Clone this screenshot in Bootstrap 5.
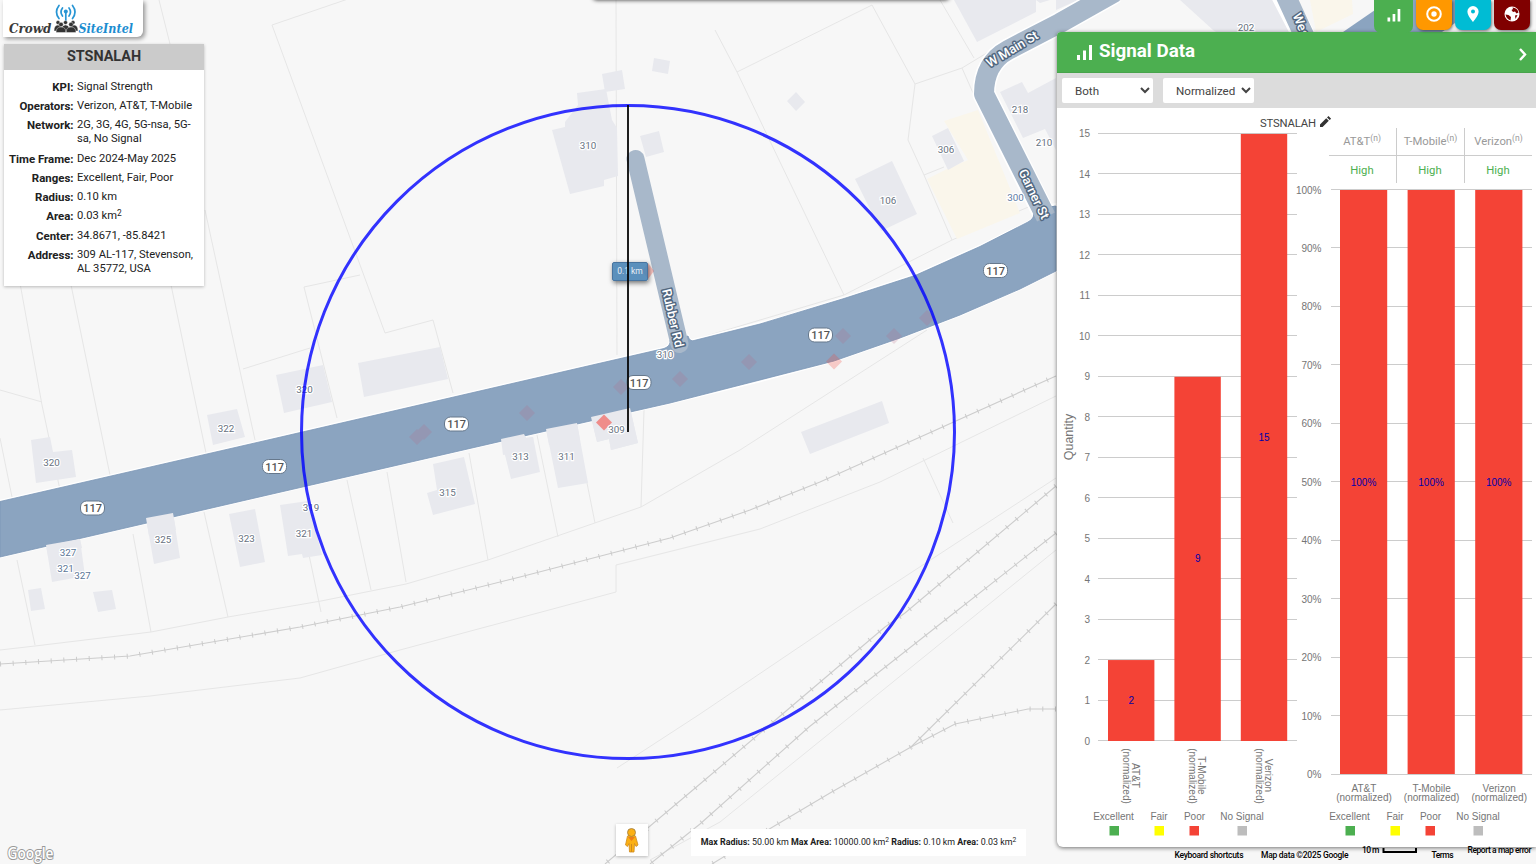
<!DOCTYPE html>
<html lang="en">
<head>
<meta charset="utf-8">
<meta name="viewport" content="width=device-width, initial-scale=1">
<title>Crowd SiteIntel</title>
<link href="https://cdn.jsdelivr.net/npm/bootstrap@5.3.0/dist/css/bootstrap.min.css" rel="stylesheet">
<style>
body{font-family:Roboto,sans-serif;width:1536px;height:864px;background:#f7f7f7;color:#212121}
.map-canvas{inset:0;width:1536px;height:864px}
.parcel{fill:none;stroke:#e6e6e6;stroke-width:1}
.bldg{fill:#e8e9ee}
.rail{fill:none;stroke:#cdcdcd;stroke-width:1.1}
.ties{fill:none;stroke:#cbcbcb;stroke-width:5;stroke-dasharray:1 11.7}
.street{fill:none;stroke:#a8b8ca;stroke-width:20;stroke-linejoin:round}
.edge{fill:none;stroke:#fff;stroke-width:23;stroke-linejoin:round}
.num{font:9.8px Roboto,sans-serif;fill:#667180;stroke:#fff;stroke-width:2.4px;paint-order:stroke;text-anchor:middle}
.stname{font:500 12.8px Roboto,sans-serif;fill:#fff;stroke:#51677f;stroke-width:3px;paint-order:stroke;stroke-linejoin:round;text-anchor:middle}
.shield rect{fill:#fff;stroke:#66788c;stroke-width:1}
.shield text{font:500 11px Roboto,sans-serif;fill:#555;text-anchor:middle}
.brand-box{left:3px;top:0;width:140px;height:37px;border-radius:0 0 6px 0;box-shadow:2px 2px 4px rgba(0,0,0,.4)}
.info-card{left:4px;top:44px;width:200px;height:242px;font-size:11.2px;line-height:14.4px;box-shadow:0 1px 3px rgba(0,0,0,.25)}
.info-title{height:25.5px;background:#cbcbcb;font-size:14.4px;line-height:26px;color:#333}
.info-row{margin-bottom:4.85px}
.info-key{width:69.5px;flex:none;font-size:11.45px}
.info-val{padding-left:3.5px;white-space:nowrap}
.info-row sup,.limits sup{font-size:75%;top:-.45em;line-height:0}
.dist{left:612px;top:262px;width:36px;height:19px;font-size:8.5px;background:rgba(70,130,180,.88);color:#e8eef5;border:1px solid #48749f;border-radius:2px;box-shadow:1px 2px 5px rgba(0,0,0,.55)}
.pegman{left:616px;top:824px;width:32px;height:32px;box-shadow:0 1px 3px rgba(0,0,0,.25)}
.limits{left:691px;top:829px;width:335px;height:27px;font-size:8.9px}
.top-shade{left:593px;top:-10px;width:356px;height:10px;border-radius:4px;box-shadow:0 0 4px rgba(0,0,0,.8)}
.tool-tabs{left:1374px;top:0;gap:3px}
.tool-tab{width:36px;height:30px;border-radius:0 0 7px 7px;box-shadow:1px 1px 3px rgba(0,0,0,.5)}
.tab-on{width:39px;height:33px;box-shadow:none}
.side-panel{left:1057px;top:32px;width:479px;height:815px;border-radius:4px 0 0 6px;box-shadow:0 1px 4px rgba(0,0,0,.55)}
.panel-head{height:41px;background:#4caf50;border-radius:4px 0 0 0;font-size:18.8px;font-weight:700;padding-left:20px;padding-right:8px;border-bottom:1px solid #48a44c}
.panel-tools{height:35px;background:#dcdcdc;padding:5px 0 5px 5px;gap:10px}
.pick{width:91px;height:25px;font-size:11.6px;border:0;border-radius:2px;color:#444;padding:0 0 0 9px}
.chart{font-family:"Liberation Sans",Arial,sans-serif;font-size:10px;fill:#757575}
.chart line{stroke:#ccc}
.credit{font-size:9px;color:#000;top:848px;left:1174px;white-space:nowrap}
</style>
</head>
<body class="position-relative overflow-hidden">
<svg class="map-canvas position-absolute" viewBox="0 0 1536 864">
<g class="parcel">
<path d="M159 0L170 44M205 210L255 440M272 25L385 333L433 320L453 393M272 25L348 -1M5 200L42 405L60 490M0 390L42 402M70 280L110 475M0 438L12 497M170 280L206 453M243 369L310 348M360 275L304 287L337 418M616 0L617 355"/>
<path d="M715 30L737 72L780 162L844 295M737 72L872 5L915 84L962 68L1000 45M915 84L908 140L924 175L952 240M924 175L944 167M940 0L974 58M962 68L985 120M693 340L844 295L952 240L1033 205"/>
<path d="M17 560L35 645M133 534L151 632M204 512L228 617M308 550L321 612M347 480L371 590M387 472L406 582M469 453L488 560M537 435L558 537M575 423L595 523M644 410L641 507"/>
<path d="M0 624"/>
<path d="M0 650L35 646L151 632L228 617L321 601L406 584L488 560L641 507L740 450L927 330M0 710L150 696L300 678L400 650L616 592V565L760 529L880 482L1056 396M617 768L700 714L860 606L1056 478M923 458L953 523M650 860L720 822L1056 550"/>
</g>
<g fill="#faf6eb"><path d="M944 121L978 110L1020 213L957 239L927 179L945 170L968 160Z"/><path d="M1310 0H1352L1353 14L1316 32Z"/></g>
<g class="bldg">
<path d="M577 93L606 89L612 120L617 128L618 176L604 180V186L570 194L552 130L565 127L565 122L578 105Z"/>
<path d="M602 74L622 70L625 89L605 92ZM654 58L670 61L668 74L652 71ZM640 136L659 131L664 152L646 157ZM787 101L796 92L805 102L796 111Z"/>
<path d="M855 179L892 161L917 214L881 231ZM932 136L948 128L964 161L948 170ZM954 0H1036V12L977 42ZM1036 0H1050L1040 3Z"/>
<path d="M1000 92L1022 82L1028 93L1056 78V150L1045 129L1023 138ZM1180 0L1213 30L1216 32H1290L1275 0ZM1056 0V10L1078 0Z"/>
<path d="M358 363L440 347L448 379L364 397ZM276 375L323 365L332 402L284 413ZM207 415L237 409L245 437L213 445ZM31 440L50 437L53 452L72 450L76 477L36 483Z"/>
<path d="M46 545L80 539L85 576L52 582ZM28 590L41 588L45 609L31 611ZM93 592L112 590L116 609L98 612ZM146 518L173 513L180 558L154 564ZM229 514L255 509L265 562L240 567ZM280 505L308 501L322 555L303 558L302 554L288 556Z"/>
<path d="M433 464L464 457L475 504L433 515L427 493L437 490ZM501 439L524 434L526 438L533 437L540 472L511 479ZM546 429L577 423L588 483L558 488ZM591 417L630 408L638 443L611 450L609 439L597 442ZM801 432L882 401L889 423L810 454Z"/>
</g>
<g>
<path class="rail" d="M0 664L130 656L300 627L400 607L520 577L670 538L750 510L820 482L1056 376"/>
<path class="ties" d="M0 664L130 656L300 627L400 607L520 577L670 538L750 510L820 482L1056 376"/>
<path class="rail" d="M1056 486L905 613L885 627L779 717L700 784L605 864"/>
<path class="ties" d="M1056 486L905 613L885 627L779 717L700 784L605 864"/>
<path class="rail" d="M1056 533L949 617L809 727L700 824L650 864"/>
<path class="ties" d="M1056 533L949 617L809 727L700 824L650 864"/>
<path class="rail" d="M1056 604L911 747"/>
<path class="ties" d="M1056 604L911 747"/>
<path class="rail" d="M1056 709H1028L955 724L911 747L830 793L771 828L712 864"/>
<path class="ties" d="M1056 709H1028L955 724L911 747L830 793L771 828L712 864"/>
</g>
<path class="edge" d="M1115 -8L1060 23L1008 50Q984 63 984 94L1050 226M1280 -10L1308 44"/>
<path d="M0 501L270 439L590 365L664 348Q671 346 670 340L688 336Q690 342 694 340L780 318L844 298L915 275L980 246L1028 222Q1036 218 1033 210L1056 204V271L1020 289L960 315L900 338L834 361L760 381L670 403L524 436L270 494.500L0 557Z" fill="#8ba4c0" stroke="#fff" stroke-width="2.500"/>
<path d="M0 501.500L270 439.500L590 365.500L664 348.500Q671 346 670 340L688 336Q690 342 694 340.500L760 324L844 298.500L915 275.500L980 246.500L1028 222Q1036 218 1033 210L1056 206V271L1020 289L960 315L900 338L834 361L760 380L670 403L524 436L270 494.500L0 557Z" fill="#8ba4c0" stroke="#7c97b6" stroke-width=".8"/>
<path class="street" d="M1115 -8L1060 23L1008 50Q984 63 984 94L1046 217M1284 -8L1308 44"/>
<path d="M635.500 159L679.500 344" fill="none" stroke="#a8b8ca" stroke-width="18" stroke-linecap="round"/>
<path d="M1343 32L1375 10L1400 -8H1500L1442 32Z" fill="#8ba4c0"/>
<g class="bldg"><path d="M46 545L80 539L82 548L48 556ZM146 518L173 513L176 530L149 536ZM501 439L524 434L526 438L533 437L535 450L503 455ZM546 429L577 423L580 440L549 445ZM591 417L630 408L638 443L611 450L609 439L597 442Z"/></g>
<g fill="#b86a84" fill-opacity=".21">
<path d="M417 429l8 8-8 8-8-8zM424 424l8 8-8 8-8-8zM527 405l8 8-8 8-8-8zM621 379l8 8-8 8-8-8zM680 371l8 8-8 8-8-8zM749 354l8 8-8 8-8-8zM843 328l8 8-8 8-8-8zM894 328l8 8-8 8-8-8zM927 310l8 8-8 8-8-8z"/>
<path d="M834 353.500l8 8-8 8-8-8z" fill="#f44336" fill-opacity=".25"/><path d="M648 263l6 8-6 8-6-8z" fill="#f44336" fill-opacity=".3"/>
<path d="M604 414.500l8 8-8 8-8-8z" fill="#ef8784" fill-opacity=".95"/></g>
<g class="num">
<text x="588" y="148.500">310</text><text x="888" y="203.500">106</text><text x="946" y="153">306</text><text x="1020" y="113">218</text><text x="1044" y="146">210</text><text x="1015.500" y="201" fill="#5d7ca4">300</text><text x="1246" y="31">202</text>
<text x="304.500" y="393">320</text><text x="226" y="431.500">322</text><text x="51.500" y="466">320</text><text x="68" y="556" fill="#5b7696">327</text><text x="65.500" y="571.500" fill="#5b7696">321</text><text x="82.500" y="578.500" fill="#5b7696">327</text><text x="163" y="543">325</text><text x="246.500" y="542">323</text><text x="304" y="537">321</text><text x="311" y="510.500">319</text><text x="447.500" y="496">315</text><text x="520.500" y="460">313</text><text x="566.500" y="459.500">311</text><text x="616.500" y="433">309</text><text x="665" y="358">310</text>
</g>
<g class="shield">
<g transform="translate(92.500 508)"><rect x="-12" y="-7" width="24" height="14" rx="6"/><text y="4">117</text></g>
<g transform="translate(274.500 466.500)"><rect x="-12" y="-7" width="24" height="14" rx="6"/><text y="4">117</text></g>
<g transform="translate(456.500 424)"><rect x="-12" y="-7" width="24" height="14" rx="6"/><text y="4">117</text></g>
<g transform="translate(639 382.500)"><rect x="-12" y="-7" width="24" height="14" rx="6"/><text y="4">117</text></g>
<g transform="translate(820.500 335)"><rect x="-12" y="-7" width="24" height="14" rx="6"/><text y="4">117</text></g>
<g transform="translate(995.500 270.500)"><rect x="-12" y="-7" width="24" height="14" rx="6"/><text y="4">117</text></g>
</g>
<g class="stname"><text transform="translate(673 318) rotate(77)" y="4.500">Rubber Rd</text><text transform="translate(1012 49) rotate(-31)" y="4.500">W Main St</text><text transform="translate(1034 194) rotate(64)" y="4.500">Garner St</text><text transform="translate(1302 27) rotate(68)" y="4.500">West</text></g>
<circle cx="628" cy="432" r="326.500" fill="none" stroke="#00f" stroke-opacity=".8" stroke-width="3"/>
<text x="7.500" y="859" font-family="Open Sans,sans-serif" font-size="16" font-weight="600" textLength="46" lengthAdjust="spacingAndGlyphs" fill="#fff" stroke="#999" stroke-width="2" paint-order="stroke">Google</text>
</svg>

<div class="top-shade position-absolute bg-white"></div>

<div class="brand-box position-absolute bg-white">
<svg width="140" height="37" viewBox="3 0 140 37" class="d-block">
<g font-family="DejaVu Serif,serif" font-weight="bold" font-style="italic" font-size="13"><text x="9" y="33" textLength="42.500" lengthAdjust="spacingAndGlyphs" fill="#3a3a3a">Crowd</text><text x="78.500" y="33" textLength="54.500" lengthAdjust="spacingAndGlyphs" fill="#1c8dd0">SiteIntel</text></g>
<g fill="none" stroke="#2795d4" stroke-width="1.700" stroke-linecap="round"><path d="M62.500 8q-3 4 0 8M59 5.500q-5 6.500 0 13M69 8q3 4 0 8M72.500 5.500q5 6.500 0 13M65.800 12v9"/></g><circle cx="65.800" cy="11.500" r="2" fill="#2795d4"/>
<g fill="#333" stroke="#fff" stroke-width=".4"><circle cx="58" cy="22.500" r="2"/><circle cx="65.500" cy="22.500" r="2"/><circle cx="73" cy="22.500" r="2"/><path d="M54 31q0-6 4-6t4 6zM70 31q0-6 4-6t4 6zM61.500 31q0-6 4-6t4 6z"/><circle cx="61" cy="24.500" r="2.300"/><circle cx="71" cy="24.500" r="2.300"/><path d="M56 32.500q0-5.500 5-5.500t5 5.500zM66 32.500q0-5.500 5-5.500t5 5.500z"/></g>
</svg></div>

<section class="info-card position-absolute bg-white">
<h1 class="info-title text-center fw-bold m-0">STSNALAH</h1>
<div style="padding-top:10px">
<div class="info-row d-flex"><b class="info-key text-end">KPI:</b><span class="info-val">Signal Strength</span></div>
<div class="info-row d-flex"><b class="info-key text-end">Operators:</b><span class="info-val">Verizon, AT&amp;T, T-Mobile</span></div>
<div class="info-row d-flex"><b class="info-key text-end">Network:</b><span class="info-val">2G, 3G, 4G, 5G-nsa, 5G-<br>sa, No Signal</span></div>
<div class="info-row d-flex"><b class="info-key text-end text-nowrap">Time Frame:</b><span class="info-val">Dec 2024-May 2025</span></div>
<div class="info-row d-flex"><b class="info-key text-end">Ranges:</b><span class="info-val">Excellent, Fair, Poor</span></div>
<div class="info-row d-flex"><b class="info-key text-end">Radius:</b><span class="info-val">0.10 km</span></div>
<div class="info-row d-flex"><b class="info-key text-end">Area:</b><span class="info-val">0.03 km<sup>2</sup></span></div>
<div class="info-row d-flex"><b class="info-key text-end">Center:</b><span class="info-val">34.8671, -85.8421</span></div>
<div class="info-row d-flex"><b class="info-key text-end">Address:</b><span class="info-val">309 AL-117, Stevenson,<br>AL 35772, USA</span></div>
</div></section>

<div class="dist position-absolute d-flex align-items-center justify-content-center">0.1 km</div>
<svg class="position-absolute" style="left:626px;top:105px" width="4" height="328"><path d="M2 0V327" stroke="#000" stroke-opacity=".88" stroke-width="2"/></svg>

<div class="pegman position-absolute bg-white">
<svg width="32" height="32" class="d-block"><path d="M11.500 12q4-2 8 0l2.500 9-2 1.500-1.500-3-.5 8.500h-4.500l-.5-8.500-1.500 3-2-1.500z" fill="#fbb014" stroke="#cf8a1e" stroke-width=".8"/><circle cx="15.500" cy="8.500" r="4" fill="#fbb014" stroke="#9b7a45" stroke-width=".8"/><path d="M12 13l3.500 4 3.500-4z" fill="#ef7d16"/><path d="M15.500 20v8" stroke="#cf8a1e"/></svg></div>
<div class="limits position-absolute bg-white d-flex align-items-center justify-content-center text-nowrap"><span><b>Max Radius:</b> 50.00 km <b>Max Area:</b> 10000.00 km<sup>2</sup> <b>Radius:</b> 0.10 km <b>Area:</b> 0.03 km<sup>2</sup></span></div>

<aside class="side-panel position-absolute bg-white d-flex flex-column">
<header class="panel-head d-flex align-items-center text-white flex-shrink-0">
<svg width="16" height="17" class="me-2" fill="#fff"><path d="M0 11h3v5H0zM6 6.500h3V16H6zM12 1h3v15h-3z"/></svg>
<span class="lh-1" style="margin-left:-2px;margin-top:-2px">Signal Data</span>
<svg width="10" height="16" class="ms-auto" style="margin-top:3px"><path d="M2 3l5 5.500L2 14" fill="none" stroke="#fff" stroke-width="2.400"/></svg>
</header>
<div class="panel-tools d-flex flex-shrink-0">
<select class="pick bg-white"><option>Both</option></select>
<select class="pick bg-white"><option>Normalized</option></select>
</div>
<svg class="chart d-block" width="479" height="739" viewBox="1057 108 479 739">
<text x="1260" y="126.500" font-family="Roboto" font-size="11.300" fill="#444" textLength="56">STSNALAH</text>
<path d="M1320 127v-2.600l6.200-6.200 2.600 2.600-6.200 6.200zM1327 117.400l1.500-1.300 2.600 2.600-1.400 1.400z" fill="#333"/>
<g id="plots"></g>
<text transform="translate(1072.500 437) rotate(-90)" font-size="12.500" text-anchor="middle">Quantity</text>
<path d="M1329 155.500H1532M1396.500 128V183M1464.500 128V183" stroke="#ccc" fill="none"/>
<g font-size="11.300" fill="#999" text-anchor="middle" font-family="Roboto"><text x="1362" y="145">AT&amp;T<tspan font-size="8.500" dy="-4">(n)</tspan></text><text x="1430.500" y="145">T-Mobile<tspan font-size="8.500" dy="-4">(n)</tspan></text><text x="1498.500" y="145">Verizon<tspan font-size="8.500" dy="-4">(n)</tspan></text></g>
<g font-size="11.300" fill="#4caf50" text-anchor="middle" font-family="Roboto"><text x="1362" y="174">High</text><text x="1430" y="174">High</text><text x="1498" y="174">High</text></g>
</svg>
</aside>

<div class="credit position-absolute"><svg width="362" height="16" class="d-block overflow-visible" font-family="Roboto,sans-serif" font-size="8.500" font-weight="500"><text x="0.500" y="9.500" textLength="69">Keyboard shortcuts</text><text x="87" y="9.500" textLength="87.500">Map data ©2025 Google</text><text x="188" y="5" textLength="17.500">10 m</text><path d="M209.500 0v4H242V0" fill="none" stroke="#000" stroke-width="2"/><text x="257.500" y="9.500" textLength="22">Terms</text><text x="293.500" y="5" textLength="64">Report a map error</text></svg></div>

<nav class="tool-tabs position-absolute d-flex">
<div class="tool-tab tab-on d-flex align-items-center justify-content-center" style="background:#4caf50"><svg width="14" height="14" fill="#fff" style="margin-top:-4px"><path d="M.5 9.500h2.700v4H.5zM5.600 6h2.700v7.500H5.600zM10.600 1h2.700v12.500h-2.700z"/></svg></div>
<div class="tool-tab d-flex align-items-center justify-content-center" style="background:#ff9800"><svg width="18" height="18" style="margin-top:-3px"><circle cx="9" cy="9" r="6.800" fill="none" stroke="#fff" stroke-width="2"/><circle cx="9" cy="9" r="2.700" fill="#fff"/></svg></div>
<div class="tool-tab d-flex align-items-center justify-content-center" style="background:#00bcd4"><svg width="12" height="16" style="margin-top:-2px"><path d="M6 0a5.600 5.600 0 0 0-5.600 5.600C.4 9.800 6 16 6 16s5.600-6.200 5.600-10.400A5.600 5.600 0 0 0 6 0zm0 7.600a2 2 0 1 1 0-4 2 2 0 0 1 0 4z" fill="#fff"/></svg></div>
<div class="tool-tab d-flex align-items-center justify-content-center" style="background:#800000"><svg width="16" height="16" style="margin-top:-3px"><circle cx="8" cy="8" r="7.500" fill="#fff"/><path d="M8.500 1.500q5 .5 6 5l-2 1-1.500-2-2 .5-1.500-2 1.500-1zM1.500 8.500l3 .5 2.500 2-.5 3.500q-4-1.500-5-6zM11 9.500l2.500-.5-2 4z" fill="#800000"/></svg></div>
</nav>
<script src="https://cdn.jsdelivr.net/npm/bootstrap@5.3.0/dist/js/bootstrap.bundle.min.js"></script>
<script>
const ops=['AT&amp;T','T-Mobile','Verizon'],qty=[2,9,15];
let s='';
const text=(x,y,t,extra='')=>`<text x="${x}" y="${y}" text-anchor="middle" ${extra}>${t}</text>`;
for(let i=0;i<=15;i++){const y=741-i*40.47;s+=`<line x1="1098" x2="1297" y1="${Math.round(y)-.5}" y2="${Math.round(y)-.5}"/><text x="1090" y="${y+3.5}" text-anchor="end">${i}</text>`}
for(let i=0;i<=10;i++){const y=774.5-i*58.45,g=Math.round(y)-.5;s+=`<line x1="1331" x2="1532" y1="${g}" y2="${g}"/><text x="1321.5" y="${y+3.5}" text-anchor="end">${i*10}%</text>`}
qty.forEach((v,i)=>{
 const h=v*40.47,x=1108+i*66.4;
 s+=`<rect x="${x}" y="${741-h}" width="46.4" height="${h}" fill="#f44336"/>`+text(x+23.3,741-h/2+3.5,v,'fill="#00a"');
 s+=`<g transform="translate(${x+18} 776) rotate(90)">${text(-.5,-6,ops[i])}${text(0,3,'(normalized)')}</g>`;
 const r=1340+i*67.6;
 s+=`<rect x="${r}" y="190" width="47.2" height="584" fill="#f44336"/>`+text(r+23.5,485.8,'100%','fill="#00a"')+text(r+24,791.5,ops[i])+text(r+24,801,'(normalized)');
});
[0,236].forEach(o=>[['Excellent',1113.5,'#4caf50',1114.5],['Fair',1159,'#ffff00',1159.5],['Poor',1194.5,'#f44336',1194.5],['No Signal',1242,'#bdbdbd',1242.5]].forEach(a=>{s+=text(a[1]+o,820,a[0])+`<rect x="${a[3]+o-5}" y="826" width="9.500" height="9.500" fill="${a[2]}"/>`}));
document.getElementById('plots').innerHTML=s;
</script>
</body>
</html>
